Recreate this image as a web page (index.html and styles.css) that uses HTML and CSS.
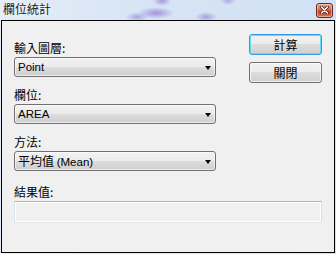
FILE: index.html
```html
<!DOCTYPE html>
<html>
<head>
<meta charset="utf-8">
<link rel="stylesheet" href="styles.css">
</head>
<body>
<div class="window">
  <div class="titlebar">
    <span class="title">欄位統計</span>
    <span class="close"><svg width="9" height="8" viewBox="0 0 9 8"><path d="M1.5 1 L7.5 7 M7.5 1 L1.5 7" stroke="#3a1a10" stroke-width="3" stroke-linecap="round"/><path d="M1.5 1 L7.5 7 M7.5 1 L1.5 7" stroke="#ffffff" stroke-width="1.6" stroke-linecap="round"/></svg></span>
  </div>
  <div class="frame">
    <div class="top">
      <div class="fields">
        <div class="group">
          <div class="label">輸入圖層:</div>
          <div class="combo"><span class="lat">Point</span><span class="arrow"></span></div>
        </div>
        <div class="group">
          <div class="label">欄位:</div>
          <div class="combo"><span class="lat">AREA</span><span class="arrow"></span></div>
        </div>
        <div class="group">
          <div class="label">方法:</div>
          <div class="combo"><span>平均值 <span class="lat">(Mean)</span></span><span class="arrow"></span></div>
        </div>
      </div>
      <div class="buttons">
        <div class="btn btn-default">計算</div>
        <div class="btn">關閉</div>
      </div>
    </div>
    <div class="result">
      <div class="label">結果值:</div>
      <div class="textbox"></div>
    </div>
  </div>
</div>
</body>
</html>
```

FILE: styles.css
```css
html, body {
  margin: 0;
  padding: 0;
}
body {
  width: 336px;
  height: 254px;
  overflow: hidden;
  font-family: "Noto Sans CJK TC", "Liberation Sans", sans-serif;
  font-size: 12px;
  color: #000;
  background: #d3e2f4;
}
.window {
  width: 336px;
  height: 254px;
  background:
    radial-gradient(ellipse 18px 6px at 156px 13px, rgba(140,110,210,0.7), rgba(140,110,210,0) 100%),
    radial-gradient(ellipse 12px 5px at 137px 17px, rgba(140,110,210,0.55), rgba(140,110,210,0) 100%),
    radial-gradient(ellipse 11px 5px at 206px 17px, rgba(140,110,210,0.6), rgba(140,110,210,0) 100%),
    radial-gradient(ellipse 9px 5px at 162px 1px, rgba(140,110,210,0.65), rgba(140,110,210,0) 100%),
    radial-gradient(ellipse 8px 4px at 228px 1px, rgba(140,110,210,0.5), rgba(140,110,210,0) 100%),
    linear-gradient(90deg, #e4edf8 0%, #d6e4f5 45%, #d2e1f4 100%);
}
.titlebar {
  height: 20px;
  display: flex;
  align-items: center;
  justify-content: space-between;
  padding: 0 3px 0 3px;
  box-sizing: border-box;
}
.title {
  font-size: 12px;
  line-height: 14px;
  color: #1a1a1a;
  margin-top: -2px;
  text-shadow: 0 0 4px rgba(255,255,255,0.9);
}
.close {
  width: 17px;
  height: 15px;
  box-sizing: border-box;
  border: 1px solid #6b2a1d;
  border-radius: 3px;
  background: linear-gradient(#e9a898 0%, #d46a50 45%, #c13e20 55%, #d9785c 100%);
  display: flex;
  align-items: center;
  justify-content: center;
  box-shadow: inset 0 0 0 1px rgba(255,220,200,0.5);
}
.frame {
  margin-left: 1px;
  width: 334px;
  height: 233px;
  box-sizing: border-box;
  border: 1px solid #000;
  background: #f0f0f0;
  padding: 13px 12px 0 12px;
}
.top {
  display: flex;
  justify-content: space-between;
}
.fields {
  width: 202px;
  padding-top: 7px;
  display: flex;
  flex-direction: column;
  gap: 11px;
}
.group {
  display: flex;
  flex-direction: column;
  gap: 2px;
}
.label {
  line-height: 14px;
  height: 14px;
  font-size: 12px;
  color: #000;
}
.combo {
  height: 20px;
  box-sizing: border-box;
  border: 1px solid #707070;
  border-radius: 3px;
  background: linear-gradient(#f2f2f2 0%, #ebebeb 50%, #dddddd 50%, #cfcfcf 100%);
  box-shadow: inset 0 0 0 1px rgba(255,255,255,0.6);
  display: flex;
  align-items: center;
  justify-content: space-between;
  padding: 0 4px 0 3px;
  line-height: 14px;
}
.lat {
  font-family: "Liberation Sans", sans-serif;
  font-size: 11.5px;
}
.arrow {
  width: 0;
  height: 0;
  border-left: 3.5px solid transparent;
  border-right: 3.5px solid transparent;
  border-top: 4px solid #000;
  margin-top: 1px;
}
.buttons {
  width: 73px;
  display: flex;
  flex-direction: column;
  gap: 7px;
}
.btn {
  height: 21px;
  box-sizing: border-box;
  border: 1px solid #707070;
  border-radius: 3px;
  background: linear-gradient(#f2f2f2 0%, #ebebeb 50%, #dddddd 50%, #cfcfcf 100%);
  box-shadow: inset 0 0 0 1px rgba(255,255,255,0.7);
  display: flex;
  align-items: center;
  justify-content: center;
  font-size: 12px;
  line-height: 14px;
}
.btn-default {
  border-color: #3399e6;
  box-shadow: inset 0 0 0 1px #66d9f9;
}
.result {
  margin-top: 14px;
  display: flex;
  flex-direction: column;
  gap: 2px;
}
.textbox {
  height: 22px;
  box-sizing: border-box;
  border: 1px solid;
  border-color: #afb2b8 #dadde2 #e3e6ea #e0e3e8;
  box-shadow: inset 0 0 0 1px #ffffff;
  background: #f0f0f0;
}
```
